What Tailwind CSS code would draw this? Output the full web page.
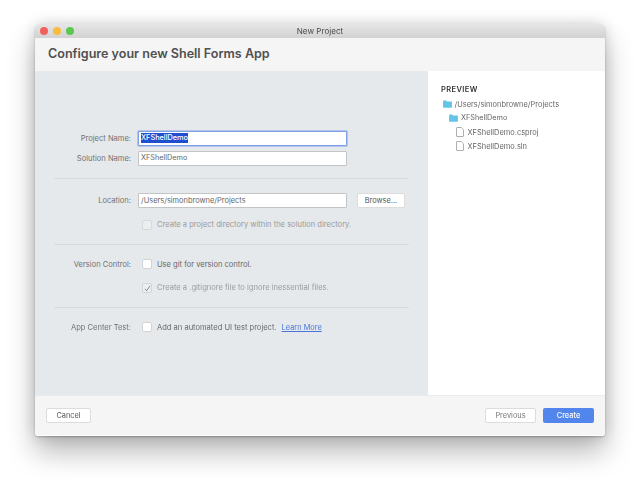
<!DOCTYPE html>
<html>
<head>
<meta charset="utf-8">
<script src="https://cdn.jsdelivr.net/npm/@tailwindcss/browser@4"></script>
</head>
<body class="bg-white w-[640px] h-[483px] overflow-hidden font-['Inter','Liberation_Sans',sans-serif]">
<div class="pt-[24px] pl-[35px]">
<div class="blur-[0.25px] w-[570px] h-[412px] rounded-t-[5px] rounded-b-[3px] overflow-hidden flex flex-col bg-white shadow-[0_16px_28px_rgba(0,0,0,0.28),0_0_16px_rgba(0,0,0,0.16),0_1px_2px_rgba(0,0,0,0.25)]">
  <div class="relative h-[14px] shrink-0 flex items-center bg-gradient-to-b from-[#e6e6e6] to-[#d2d2d2] pl-[5px] gap-[5.5px]">
    <span class="w-[7.5px] h-[7.5px] rounded-full bg-[#f1605a]"></span>
    <span class="w-[7.5px] h-[7.5px] rounded-full bg-[#f8bc3f]"></span>
    <span class="w-[7.5px] h-[7.5px] rounded-full bg-[#5cc74f]"></span>
    <span class="absolute inset-0 flex items-center justify-center text-[8.1px] text-[#4c4c4c]">New Project</span>
  </div>
  <div class="h-[33px] shrink-0 bg-[#f5f5f5] flex items-center pl-[13px]">
    <h1 class="text-[12.55px] font-semibold text-[#505050]">Configure your new Shell Forms App</h1>
  </div>
  <div class="h-[324px] shrink-0 flex">
    <div class="w-[393px] bg-[#e6e9ec] pt-[60px] text-[7.55px] text-[#555]">
      <div class="flex items-center h-[14px] mb-[6px]">
        <span class="w-[96px] pt-px text-right text-[#707070]">Project Name:</span>
        <div class="ml-[7px] w-[209px] h-[15px] bg-white border border-[#7f9fe6] shadow-[0_0_0_1px_rgba(100,140,230,0.4)] flex items-center pl-[2px] rounded-[1px]"><span class="bg-[#1f4fd0] text-white font-medium text-[7.3px]">XFShellDemo</span></div>
      </div>
      <div class="flex items-center h-[14px]">
        <span class="w-[96px] pt-px text-right text-[#707070]">Solution Name:</span>
        <div class="ml-[7px] w-[209px] h-[15px] pt-px bg-white border border-[#c4c4c4] flex items-center pl-[2px] text-[#666] text-[7.3px] rounded-[1px]">XFShellDemo</div>
      </div>
      <div class="mt-[13px] ml-[19px] w-[355px] h-px bg-[#d8dadd]"></div>
      <div class="flex items-center h-[14px] mt-[14px]">
        <span class="w-[96px] pt-px text-right text-[#707070]">Location:</span>
        <div class="ml-[7px] w-[209px] h-[15px] pt-px bg-white border border-[#c4c4c4] flex items-center pl-[2px] text-[#666] text-[7.45px] rounded-[1px]">/Users/simonbrowne/Projects</div>
        <div class="ml-[10px] w-[48px] h-[15px] pt-px bg-white border border-[#dcdcdc] rounded-[2px] flex items-center justify-center text-[#555] text-[7.4px]">Browse...</div>
      </div>
      <div class="flex items-center h-[12px] mt-[12px] text-[#9a9a9a]">
        <span class="ml-[107px] w-[10px] h-[10px] bg-[#eceef0] border border-[#d8d8d8] rounded-[2px]"></span>
        <span class="ml-[5px]">Create a project directory within the solution directory.</span>
      </div>
      <div class="mt-[13px] ml-[19px] w-[355px] h-px bg-[#d8dadd]"></div>
      <div class="flex items-center h-[12px] mt-[13px]">
        <span class="w-[96px] pt-px text-right text-[#707070]">Version Control:</span>
        <span class="ml-[11px] w-[10px] h-[10px] bg-white border border-[#d4d4d4] rounded-[2px]"></span>
        <span class="ml-[5px] pt-px text-[#666]">Use git for version control.</span>
      </div>
      <div class="flex items-center h-[12px] mt-[12px] text-[#9a9a9a]">
        <span class="ml-[107px] w-[10px] h-[10px] bg-[#eceef0] border border-[#d4d4d4] rounded-[2px] flex items-center justify-center">
          <svg width="7" height="7" viewBox="0 0 7 7" fill="none"><path d="M1 3.8 L2.7 5.8 L6 0.8" stroke="#777" stroke-width="0.8"/></svg>
        </span>
        <span class="ml-[5px]">Create a .gitignore file to ignore inessential files.</span>
      </div>
      <div class="mt-[13px] ml-[19px] w-[355px] h-px bg-[#d8dadd]"></div>
      <div class="flex items-center h-[12px] mt-[13px]">
        <span class="w-[96px] pt-px text-right text-[#707070]">App Center Test:</span>
        <span class="ml-[11px] w-[10px] h-[10px] bg-white border border-[#d4d4d4] rounded-[2px]"></span>
        <span class="ml-[5px] pt-px text-[#666]">Add an automated UI test project.</span>
        <a class="ml-[5px] pt-px text-[#4a74d8] underline text-[7.4px]">Learn More</a>
      </div>
    </div>
    <div class="flex-1 bg-white pl-[13px] pt-[13px] text-[7.45px] text-[#666]">
      <div class="text-[7.5px] font-semibold text-[#333] tracking-[0.4px] h-[10px] leading-[11px]">PREVIEW</div>
      <div class="flex items-center h-[14px] mt-[3px] ml-[1.5px] gap-[3px]">
        <svg width="9" height="8" viewBox="0 0 10 9"><path d="M0 1.2 Q0 .5 .7 .5 H3.4 L4.4 1.6 H9.3 Q10 1.6 10 2.3 V8 Q10 8.6 9.3 8.6 H.7 Q0 8.6 0 8 Z" fill="#64c4e8"/></svg>
        <span class="pt-px">/Users/simonbrowne/Projects</span>
      </div>
      <div class="flex items-center h-[14px] ml-[8px] gap-[3px]">
        <svg width="9" height="8" viewBox="0 0 10 9"><path d="M0 1.2 Q0 .5 .7 .5 H3.4 L4.4 1.6 H9.3 Q10 1.6 10 2.3 V8 Q10 8.6 9.3 8.6 H.7 Q0 8.6 0 8 Z" fill="#64c4e8"/></svg>
        <span class="pt-px text-[7.3px]">XFShellDemo</span>
      </div>
      <div class="flex items-center h-[14px] ml-[15px] gap-[3.5px]">
        <svg width="8" height="10" viewBox="0 0 8 10" fill="none"><path d="M.5 1 Q.5 .5 1 .5 H5.3 L7.5 2.7 V9 Q7.5 9.5 7 9.5 H1 Q.5 9.5 .5 9 Z" stroke="#9a9a9a" stroke-width="0.8"/></svg>
        <span class="pt-px">XFShellDemo.csproj</span>
      </div>
      <div class="flex items-center h-[14px] ml-[15px] gap-[3.5px]">
        <svg width="8" height="10" viewBox="0 0 8 10" fill="none"><path d="M.5 1 Q.5 .5 1 .5 H5.3 L7.5 2.7 V9 Q7.5 9.5 7 9.5 H1 Q.5 9.5 .5 9 Z" stroke="#9a9a9a" stroke-width="0.8"/></svg>
        <span class="pt-px">XFShellDemo.sln</span>
      </div>
    </div>
  </div>
  <div class="flex-1 bg-[#f5f5f5] border-t border-[#ebebeb] shadow-[inset_0_-1px_0_#ffffff] flex items-center justify-between pl-[11px] pr-[11px] pb-[1px] text-[7.4px]">
    <div class="w-[45px] h-[15px] pt-px bg-white border border-[#dcdcdc] rounded-[2px] flex items-center justify-center text-[#555]">Cancel</div>
    <div class="flex gap-[7px]">
      <div class="w-[51px] h-[15px] pt-px bg-white border border-[#dcdcdc] rounded-[2px] flex items-center justify-center text-[#777]">Previous</div>
      <div class="w-[51px] h-[15px] pt-px bg-[#5286ec] rounded-[2px] flex items-center justify-center text-white font-medium">Create</div>
    </div>
  </div>
</div>
</div>
</body>
</html>
